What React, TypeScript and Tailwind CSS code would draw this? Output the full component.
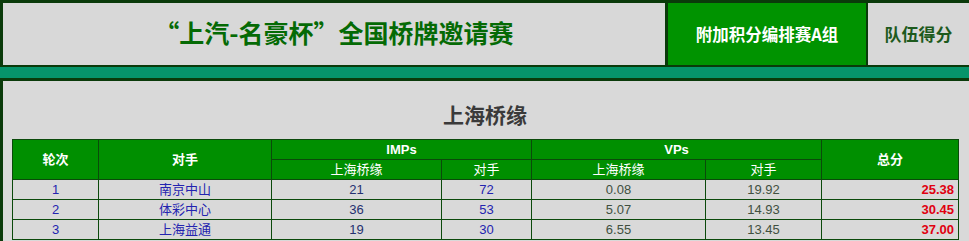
const rows = [
  { round: "1", team: "南京中山", impUs: "21", impThem: "72", vpUs: "0.08", vpThem: "19.92", total: "25.38" },
  { round: "2", team: "体彩中心", impUs: "36", impThem: "53", vpUs: "5.07", vpThem: "14.93", total: "30.45" },
  { round: "3", team: "上海益通", impUs: "19", impThem: "30", vpUs: "6.55", vpThem: "13.45", total: "37.00" },
];

const cjk = "font-['Noto_Sans_CJK_SC',sans-serif]";
const body = "font-['Liberation_Sans','Noto_Sans_CJK_SC',sans-serif]";

export default function App() {
  return (
    <div className={`h-[241px] w-[969px] overflow-hidden bg-[#d9d9d9] ${body}`}>
      {/* top banner */}
      <div className="flex h-[67px] border-b-2 border-l-[3px] border-t-[3px] border-[#0a3a0a]">
        <div className={`flex flex-1 items-center justify-center border-r-[3px] border-[#0a3a0a] bg-[#d8d8d8] pb-[2px] text-[25px] font-bold text-[#056a05] ${cjk}`}>
          “上汽-名豪杯”全国桥牌邀请赛
        </div>
        <div className={`flex w-[200px] items-center justify-center border-r-2 border-[#0a3a0a] bg-[#009300] text-[16.5px] font-bold text-white ${cjk}`}>
          附加积分编排赛A组
        </div>
        <div className={`flex w-[101px] items-center justify-center bg-[#d8d8d8] text-[17px] font-bold text-[#1d5a1d] ${cjk}`}>
          队伍得分
        </div>
      </div>

      {/* stripe */}
      <div className="h-[11px] bg-[#06946a]" />
      <div className="h-[3px] bg-[#0a3a0a]" />

      {/* content panel */}
      <div className="h-[160px] border-l-[3px] border-[#0a3a0a] pl-[9px]">
        <div className={`flex h-[58px] w-[946px] items-center justify-center pt-[9px] text-[21px] font-bold text-[#3a3a3a] ${cjk}`}>
          上海桥缘
        </div>

        <table className="w-[946px] table-fixed border-collapse text-[13px]">
          <colgroup>
            <col className="w-[86px]" />
            <col className="w-[173px]" />
            <col className="w-[170px]" />
            <col className="w-[90px]" />
            <col className="w-[174px]" />
            <col className="w-[116px]" />
            <col className="w-[137px]" />
          </colgroup>
          <thead className="bg-[#008f00] text-white">
            <tr className="h-[20px]">
              <th rowSpan={2} className="border border-[#0b4a0b] font-bold">轮次</th>
              <th rowSpan={2} className="border border-[#0b4a0b] font-bold">对手</th>
              <th colSpan={2} className="border border-[#0b4a0b] font-bold leading-[18px]">IMPs</th>
              <th colSpan={2} className="border border-[#0b4a0b] font-bold leading-[18px]">VPs</th>
              <th rowSpan={2} className="border border-[#0b4a0b] font-bold">总分</th>
            </tr>
            <tr className="h-[20px]">
              <th className="border border-[#0b4a0b] font-normal leading-[18px]">上海桥缘</th>
              <th className="border border-[#0b4a0b] font-normal leading-[18px]">对手</th>
              <th className="border border-[#0b4a0b] font-normal leading-[18px]">上海桥缘</th>
              <th className="border border-[#0b4a0b] font-normal leading-[18px]">对手</th>
            </tr>
          </thead>
          <tbody className="bg-[#d9d9d9]">
            {rows.map((r) => (
              <tr key={r.round} className="h-[20px] leading-[18px]">
                <td className="border border-[#0b4a0b] text-center text-[#2323b0]">{r.round}</td>
                <td className="border border-[#0b4a0b] text-center text-[#2323b0]">{r.team}</td>
                <td className="border border-[#0b4a0b] text-center text-[#253070]">{r.impUs}</td>
                <td className="border border-[#0b4a0b] text-center text-[#2323b0]">{r.impThem}</td>
                <td className="border border-[#0b4a0b] text-center text-[#405040]">{r.vpUs}</td>
                <td className="border border-[#0b4a0b] text-center text-[#405040]">{r.vpThem}</td>
                <td className="border border-[#0b4a0b] pr-[4px] text-right font-bold text-[#e00010]">{r.total}</td>
              </tr>
            ))}
          </tbody>
        </table>
      </div>
    </div>
  );
}
